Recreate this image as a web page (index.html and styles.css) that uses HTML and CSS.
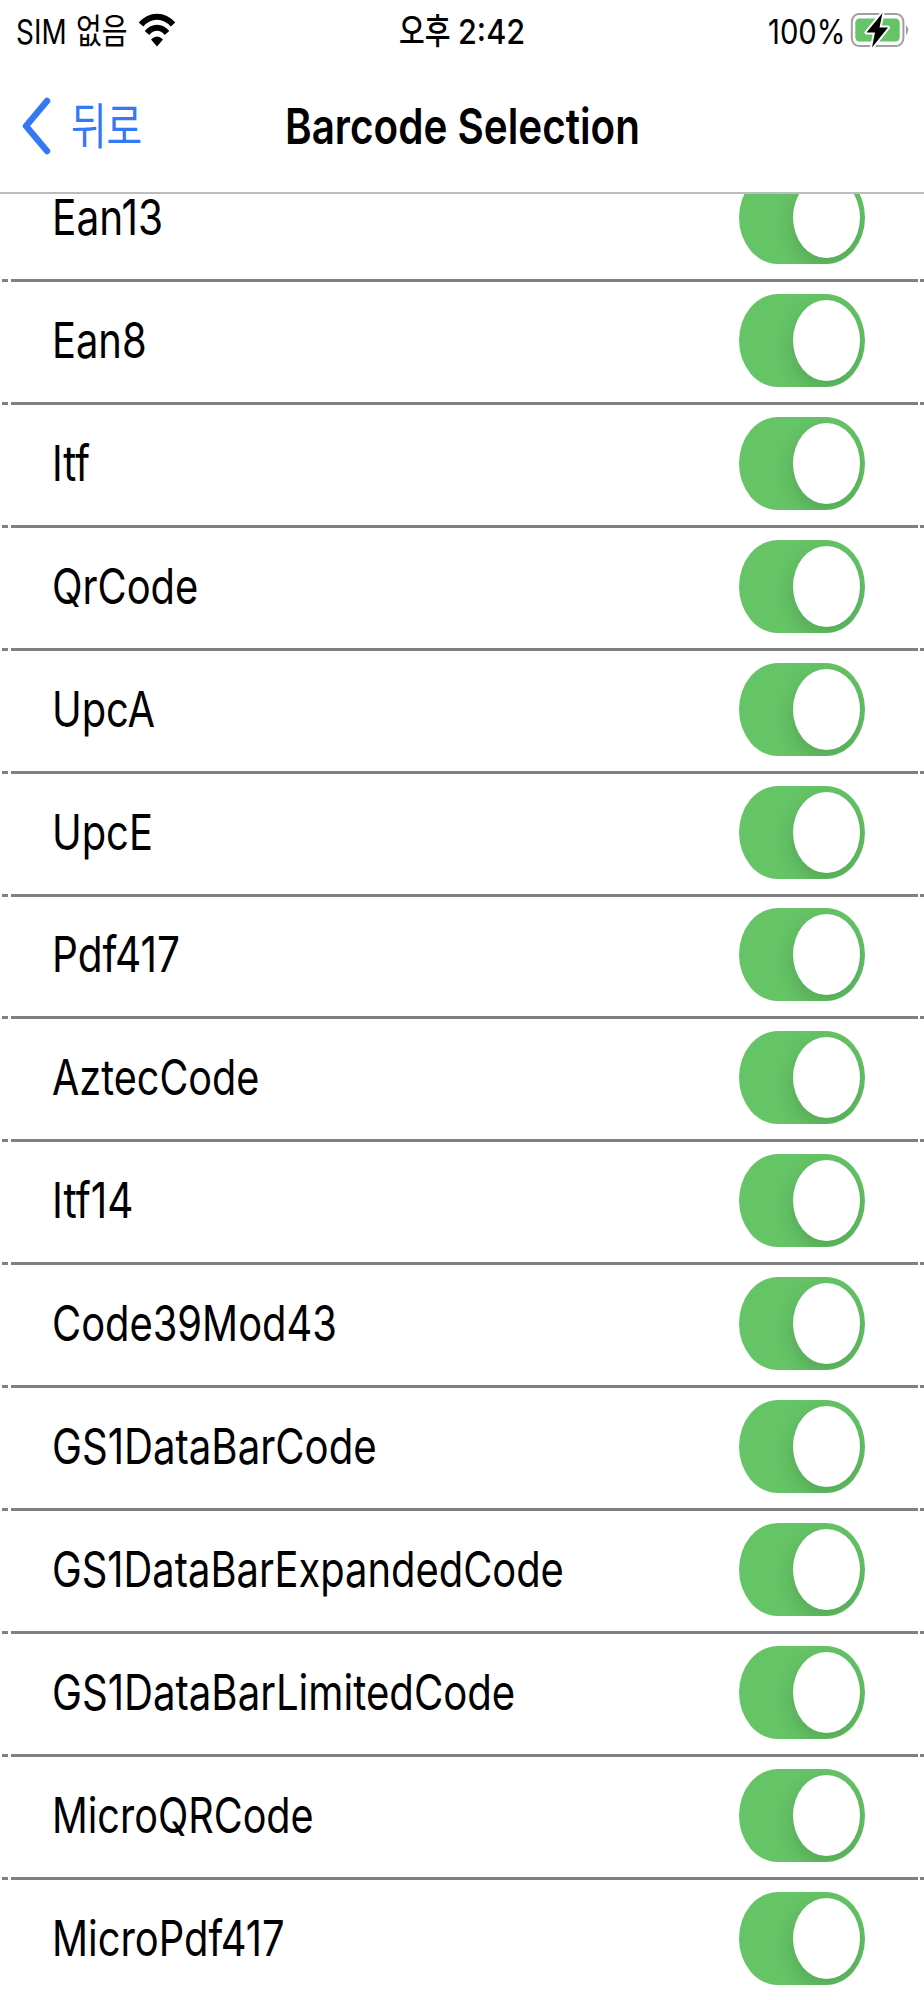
FILE: index.html
```
<!DOCTYPE html>
<html lang="ko">
<head>
<meta charset="utf-8">
<title>Barcode Selection</title>
<link rel="stylesheet" href="styles.css">
</head>
<body>
<div class="screen">
  <header class="top">
    <div class="status">
      <div class="carrier"><span class="sim">SIM</span><span class="none">없음</span>
        <svg class="wifi" width="38" height="34" viewBox="0 0 38 34">
          <path d="M3 11.5C12 1 26 1 35 11.5" fill="none" stroke="#000" stroke-width="6"/>
          <path d="M9 20C15 13 23 13 29 20" fill="none" stroke="#000" stroke-width="6"/>
          <path d="M13 26.5Q19 20.5 25 26.5L19 33.5Z" fill="#000"/>
        </svg>
      </div>
      <div class="clock"><span class="ampm">오후</span><span class="time">2:42</span></div>
      <div class="power"><span class="pct">100%</span>
        <svg class="battery" width="60" height="38" viewBox="0 0 60 38">
          <rect x="1.8" y="3" width="51.6" height="32" rx="7" ry="8" fill="none" stroke="#a0a0a0" stroke-width="2"/>
          <rect x="5.3" y="7.5" width="44.4" height="23" rx="4" ry="4.5" fill="#65c466"/>
          <path d="M56 14Q60.500 19 56 24Z" fill="#a0a0a0"/>
          <path d="M32.500 2L16.500 21.500H25L22 36.500L38 16.500H29.500Z" fill="#000" stroke="#fff" stroke-width="4" paint-order="stroke" stroke-linejoin="round"/>
        </svg>
      </div>
    </div>
    <nav class="nav">
      <a class="back"><svg class="chevron" width="30" height="60" viewBox="0 0 30 60"><path d="M25 5L4 30L25 55" fill="none" stroke="#3478f6" stroke-width="6.500" stroke-linecap="round" stroke-linejoin="round"/></svg><span class="back-label">뒤로</span></a>
      <h1 class="title">Barcode Selection</h1>
    </nav>
  </header>
  <main class="list">
    <div class="row"><span class="label numeric">Ean13</span><i class="switch"><b class="knob"></b></i></div>
    <div class="row"><span class="label">Ean8</span><i class="switch"><b class="knob"></b></i></div>
    <div class="row"><span class="label">Itf</span><i class="switch"><b class="knob"></b></i></div>
    <div class="row"><span class="label">QrCode</span><i class="switch"><b class="knob"></b></i></div>
    <div class="row"><span class="label">UpcA</span><i class="switch"><b class="knob"></b></i></div>
    <div class="row"><span class="label">UpcE</span><i class="switch"><b class="knob"></b></i></div>
    <div class="row"><span class="label numeric">Pdf417</span><i class="switch"><b class="knob"></b></i></div>
    <div class="row"><span class="label compact">AztecCode</span><i class="switch"><b class="knob"></b></i></div>
    <div class="row"><span class="label numeric">Itf14</span><i class="switch"><b class="knob"></b></i></div>
    <div class="row"><span class="label">Code39Mod43</span><i class="switch"><b class="knob"></b></i></div>
    <div class="row"><span class="label wide">GS1DataBarCode</span><i class="switch"><b class="knob"></b></i></div>
    <div class="row"><span class="label">GS1DataBarExpandedCode</span><i class="switch"><b class="knob"></b></i></div>
    <div class="row"><span class="label wide">GS1DataBarLimitedCode</span><i class="switch"><b class="knob"></b></i></div>
    <div class="row"><span class="label compact">MicroQRCode</span><i class="switch"><b class="knob"></b></i></div>
    <div class="row"><span class="label">MicroPdf417</span><i class="switch"><b class="knob"></b></i></div>
  </main>
</div>
</body>
</html>
```
FILE: styles.css
```
* { box-sizing: border-box; }
body { margin: 0; background: #fff; color: #000; font-family: Inter, "Noto Sans CJK KR", sans-serif; }
.screen { height: 2000px; display: flex; flex-direction: column; overflow: hidden; }
.top { height: 194px; flex: none; border-bottom: 2px solid #bdbdbd; background: #fff; z-index: 1; }
.status { height: 60px; display: grid; grid-template-columns: 1fr auto 1fr; align-items: center; font-size: 34px; line-height: 60px; white-space: nowrap; }
.status span { display: block; transform-origin: left center; }
.carrier, .clock, .power { display: flex; align-items: center; height: 60px; }
.sim { width: 60px; margin-left: 16px; transform: translateY(1.5px) scaleX(.82); }
.none { width: 61px; font-size: 35px; transform: translateY(1px) scaleX(.8); }
.wifi { margin-left: 1px; }
.clock { font-weight: 500; width: 128px; }
.ampm { width: 59px; font-size: 35px; transform: translate(1px, 1px) scaleX(.8); }
.time { width: 66px; transform: translate(1px, 1.5px) scaleX(.9); }
.power { justify-content: flex-end; padding-right: 14px; }
.pct { width: 83px; transform: translate(1px, 1.5px) scaleX(.86); }
.battery { margin-bottom: 1px; }
.nav { height: 132px; display: grid; grid-template-columns: 285px 1fr; align-items: center; }
.back { display: flex; align-items: center; padding-left: 22px; color: #3478f6; }
.chevron { display: block; }
.back-label { margin-left: 19px; font-size: 49px; line-height: 60px; transform: translateY(1px) scaleX(.79); transform-origin: left center; }
.title { margin: 0; font-size: 49px; line-height: 60px; font-weight: 600; white-space: nowrap; transform: translateY(1px) scaleX(.825); transform-origin: left center; }
.list { flex: 1; min-height: 0; margin-top: -35px; }
.row { height: 122.930px; display: flex; align-items: center; justify-content: space-between; padding: 0 59px 5px 52px; background: linear-gradient(90deg, transparent 2px, #808080 2px 8px, transparent 8px 11px, #808080 11px 918px, transparent 918px 920px, #808080 920px) 0 100% / 100% 3px no-repeat; }
.label { width: 640px; font-size: 49px; line-height: 60px; white-space: nowrap; transform: scaleX(.814); transform-origin: left center; }
.numeric { transform: scaleX(.828); }
.wide { transform: scaleX(.819); }
.compact { transform: scaleX(.808); }
.switch { display: flex; align-items: center; justify-content: flex-end; flex: none; width: 126px; height: 93px; margin-top: -1px; padding-right: 5px; border-radius: 39px / 46.500px; background: #65c466; overflow: hidden; }
.knob { width: 67px; height: 81px; border-radius: 50%; background: #fff; box-shadow: 0 8px 20px rgba(0,0,0,.16); }
```
